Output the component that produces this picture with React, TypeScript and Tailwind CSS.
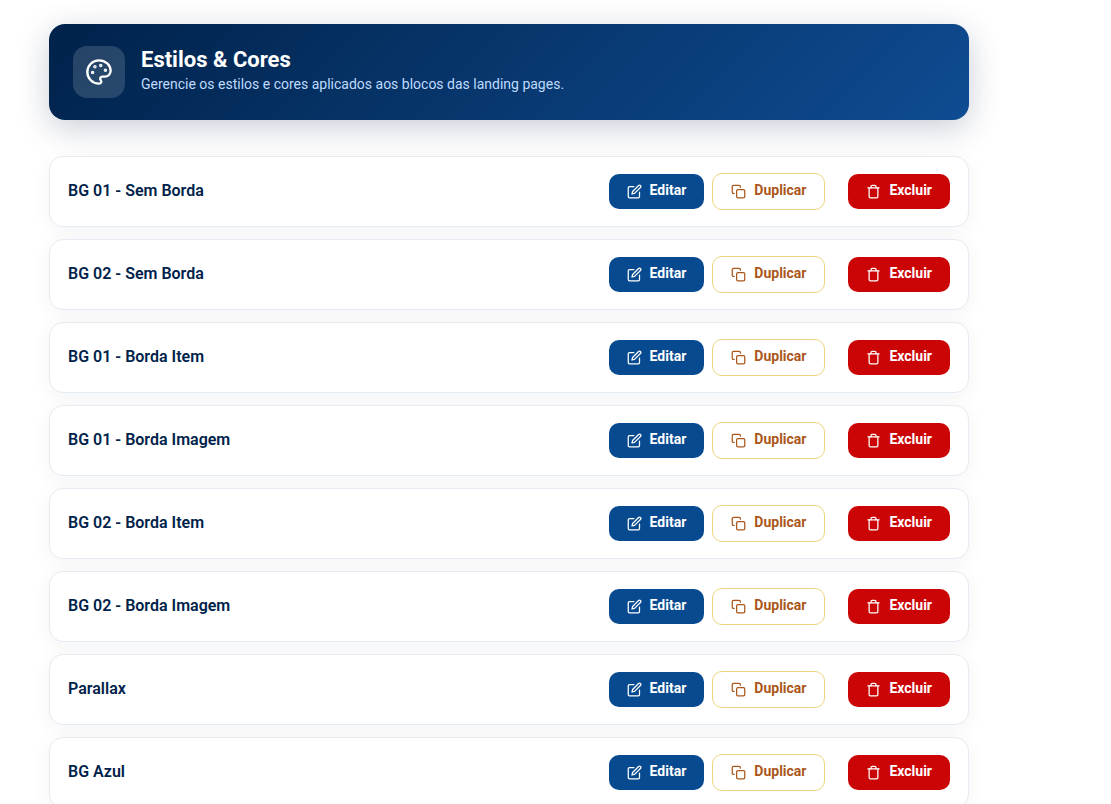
import type { ReactNode } from "react";
import { Palette } from "lucide-react";
import { FiCopy, FiEdit, FiTrash } from "react-icons/fi";

const styles = [
  "BG 01 - Sem Borda",
  "BG 02 - Sem Borda",
  "BG 01 - Borda Item",
  "BG 01 - Borda Imagem",
  "BG 02 - Borda Item",
  "BG 02 - Borda Imagem",
  "Parallax",
  "BG Azul",
];

function ActionButton({ icon, label, className }: { icon: ReactNode; label: string; className: string }) {
  return (
    <button
      type="button"
      className={`inline-flex items-center gap-2 rounded-[10px] px-[18px] py-[9px] text-sm font-bold ${className}`}
    >
      {icon}
      <span className="pb-0.5 leading-[15px]">{label}</span>
    </button>
  );
}

function PageHeader() {
  return (
    <header className="flex items-center gap-4 rounded-2xl bg-[linear-gradient(135deg,#00224a,#0f4c92)] px-6 py-[22px] shadow-[0_8px_32px_rgba(0,33,73,0.22)]">
      <div className="flex size-[52px] shrink-0 items-center justify-center rounded-[14px] bg-white/15">
        <Palette className="size-7 text-white" />
      </div>
      <div>
        <h1 className="text-[22px] leading-6 font-bold text-white">Estilos &amp; Cores</h1>
        <p className="text-sm leading-6 text-[#bfdbfe]">
          Gerencie os estilos e cores aplicados aos blocos das landing pages.
        </p>
      </div>
    </header>
  );
}

function StyleRow({ name }: { name: string }) {
  return (
    <li className="flex items-center justify-between gap-4 rounded-[14px] border border-[#e6eaf1] bg-white px-[18px] py-4 shadow-[0_4px_20px_rgba(0,33,73,0.05)]">
      <span className="pb-0.5 text-base leading-5 font-semibold text-[#00224a]">{name}</span>
      <div className="flex items-center gap-2">
        <ActionButton icon={<FiEdit className="size-[15px]" />} label="Editar" className="bg-[#084a8f] text-white" />
        <ActionButton
          icon={<FiCopy className="size-[15px]" />}
          label="Duplicar"
          className="border border-[#ecd67c] bg-white text-[#ab571b]"
        />
        <ActionButton
          icon={<FiTrash className="size-[15px]" />}
          label="Excluir"
          className="ml-[15px] bg-[#cb0505] text-white"
        />
      </div>
    </li>
  );
}

export default function App() {
  return (
    <main className="min-h-screen bg-white py-6 pr-6 pl-[49px] font-[Roboto,sans-serif]">
      <div className="max-w-[920px]">
        <PageHeader />
        <ul className="mt-9 flex flex-col gap-3">
          {styles.map((name) => (
            <StyleRow key={name} name={name} />
          ))}
        </ul>
      </div>
    </main>
  );
}
